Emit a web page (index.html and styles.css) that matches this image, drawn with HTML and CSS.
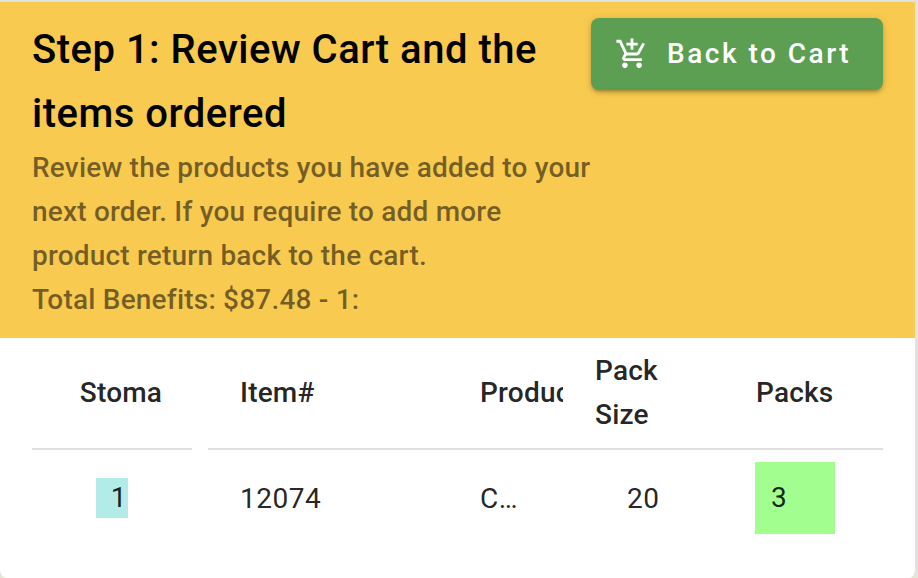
FILE: index.html
```html
<!DOCTYPE html>
<html lang="en">
<head>
  <meta charset="UTF-8" />
  <meta name="viewport" content="width=device-width, initial-scale=1.0" />
  <title>Review Cart</title>
  <link rel="stylesheet" href="styles.css">
</head>
<body>
  <div class="card">
    <div class="banner">
      <div class="banner-top">
        <h1 class="title">Step 1: Review Cart and the items ordered</h1>
        <button class="back-btn">
          <svg class="cart-icon" viewBox="0 0 24 24" aria-hidden="true">
            <path d="M11 9h2V6h3V4h-3V1h-2v3H8v2h3v3zm-4 9c-1.1 0-1.99.9-1.99 2S5.900 22 7 22s2-.9 2-2-.9-2-2-2zm10 0c-1.100 0-1.990.9-1.990 2s.890 2 1.990 2 2-.9 2-2-.9-2-2-2zm-9.830-3.250l.030-.120.900-1.630h7.450c.750 0 1.410-.410 1.750-1.030l3.860-7.010L19.420 4h-.010l-1.100 2-2.760 5H8.530l-.130-.270L6.160 6l-.950-2-.940-2H1v2h2l3.600 7.590-1.350 2.450c-.160.280-.250.610-.250.960 0 1.100.900 2 2 2h12v-2H7.420c-.130 0-.250-.110-.250-.250z"/>
          </svg>
          <span>Back to Cart</span>
        </button>
      </div>
      <p class="subtitle">Review the products you have added to your next order. If you require to add more product return back to the cart.</p>
      <p class="subtitle">Total Benefits: $87.48 - 1:</p>
    </div>

    <div class="table">
      <div class="th th-stoma">Stoma</div>
      <div class="th">Item#</div>
      <div class="th th-clip"><span>Product</span></div>
      <div class="th">Pack Size</div>
      <div class="th">Packs</div>

      <div class="td td-stoma"><span class="stoma-tag">1</span></div>
      <div class="td">12074</div>
      <div class="td">C…</div>
      <div class="td td-num">20</div>
      <div class="td td-packs"><span class="packs-tag">3</span></div>
    </div>
  </div>
</body>
</html>
```

FILE: styles.css
```css
* {
  box-sizing: border-box;
}

body {
  margin: 0;
  background: #e6e6d8;
  font-family: Roboto, sans-serif;
  overflow: hidden;
}

.card {
  width: 917px;
  height: 578px;
  background: #fff;
  border-top: 2px solid #e2e2e2;
  border-right: 2px solid #e2e2e2;
  border-radius: 0 0 8px 8px;
  overflow: hidden;
}

.banner {
  height: 336px;
  padding: 16px 32px 0;
  background: #f8ca4f;
}

.banner-top {
  display: flex;
  align-items: flex-start;
  justify-content: space-between;
}

.title {
  width: 540px;
  margin: 0;
  font-size: 40px;
  font-weight: 500;
  line-height: 64px;
  letter-spacing: 0.5px;
  color: #000;
}

.back-btn {
  display: flex;
  align-items: center;
  width: 292px;
  height: 72px;
  padding: 0 0 2px 24px;
  border: 0;
  border-radius: 8px;
  background: #5c9f52;
  color: #fff;
  font-family: Roboto, sans-serif;
  font-size: 28px;
  font-weight: 500;
  letter-spacing: 2.5px;
  box-shadow: 0 3px 3px -2px rgba(0, 0, 0, 0.2), 0 3px 4px 0 rgba(0, 0, 0, 0.14), 0 1px 8px 0 rgba(0, 0, 0, 0.12);
}

.cart-icon {
  width: 34px;
  height: 34px;
  margin-top: 2px;
  margin-right: 18px;
  fill: #fff;
}

.subtitle {
  width: 570px;
  margin: 0;
  font-size: 28px;
  font-weight: 500;
  line-height: 44px;
  letter-spacing: 0.2px;
  color: rgba(0, 0, 0, 0.54);
}

.table {
  display: grid;
  grid-template-columns: 176px 240px 115px 161px 159px;
  margin-left: 32px;
  color: rgba(0, 0, 0, 0.87);
  font-size: 28px;
}

.th {
  display: flex;
  align-items: center;
  height: 112px;
  padding: 0 32px;
  border-bottom: 2px solid #e0e0e0;
  font-weight: 500;
  line-height: 44px;
  letter-spacing: 0.2px;
}

.th-stoma {
  justify-content: center;
  margin-right: 16px;
  padding: 0 0 0 18px;
}

.th-clip {
  overflow: hidden;
}

.td {
  display: flex;
  align-items: center;
  height: 96px;
  padding-left: 32px;
  letter-spacing: 0.5px;
}

.td-stoma {
  padding-left: 64px;
}

.td-num {
  padding-left: 64px;
}

.stoma-tag {
  width: 32px;
  height: 40px;
  padding-right: 1px;
  background: #b2ebe7;
  line-height: 40px;
  text-align: right;
}

.td-packs {
  padding-left: 31px;
}

.packs-tag {
  width: 80px;
  height: 72px;
  padding-left: 16px;
  background: #a3fe90;
  line-height: 72px;
}
```
